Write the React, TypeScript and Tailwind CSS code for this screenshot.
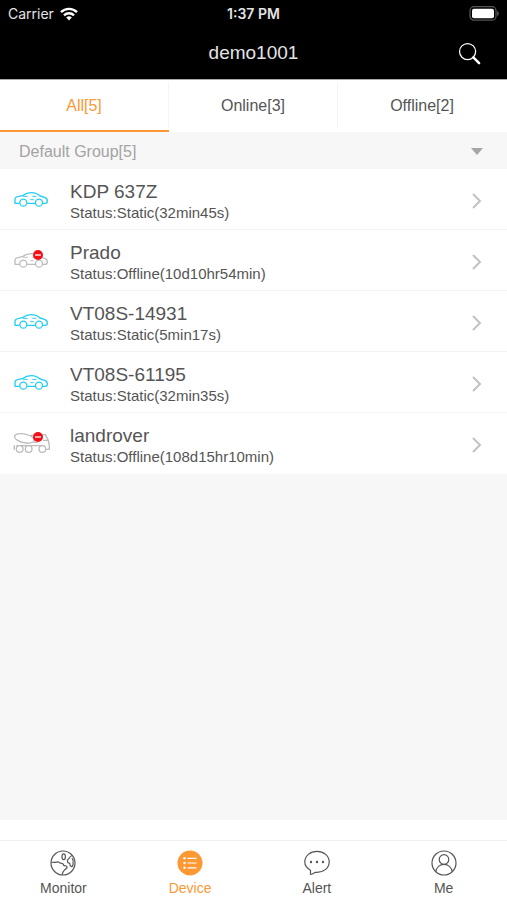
import React, { memo } from "react";
import clsx from "clsx";

type VehicleKind = "car" | "mixer";

interface Device {
  id: number;
  name: string;
  status: string;
  kind: VehicleKind;
  offline?: boolean;
}

const devices: Device[] = [
  { id: 1, name: "KDP 637Z", status: "Static(32min45s)", kind: "car" },
  { id: 2, name: "Prado", status: "Offline(10d10hr54min)", kind: "car", offline: true },
  { id: 3, name: "VT08S-14931", status: "Static(5min17s)", kind: "car" },
  { id: 4, name: "VT08S-61195", status: "Static(32min35s)", kind: "car" },
  { id: 5, name: "landrover", status: "Offline(108d15hr10min)", kind: "mixer", offline: true },
];

const filters = [
  { label: "All[5]", active: true },
  { label: "Online[3]", active: false },
  { label: "Offline[2]", active: false },
];

function CarIcon() {
  return (
    <svg viewBox="0 0 114 60" fill="none" stroke="currentColor" strokeWidth="4" strokeLinejoin="round" className="h-5 w-[38px]">
      <path d="M19 43H6V31c0-5 4-8 12-9l10-2c8-6 15-9 27-9 12 0 19 3 26 10l14 4c6 2 8 6 8 11l-1 5-4 2h-8M43 43h24" />
      <circle cx="31" cy="41" r="10.5" />
      <circle cx="78" cy="41" r="10.5" />
      <path d="M30 22h14M58 22h12M52 32h10" strokeWidth="3" />
    </svg>
  );
}

function MixerIcon() {
  return (
    <svg viewBox="0 0 114 66" fill="none" stroke="currentColor" strokeWidth="4" strokeLinejoin="round" className="h-[22px] w-[38px]">
      <ellipse cx="34" cy="19" rx="30" ry="13" transform="rotate(12 34 19)" />
      <path d="M4 40v13M52 11l22-4M62 31h12M10 41h84M86 8h11l9 17 3 14v13h-9M90 25h14" />
      <g fill="#fff">
        <circle cx="20" cy="51" r="10" />
        <circle cx="47" cy="51" r="10" />
        <circle cx="88" cy="51" r="10" />
      </g>
    </svg>
  );
}

const DeviceRow = memo(function DeviceRow({ name, status, kind, offline }: Device) {
  return (
    <li className="border-b border-[#f3f3f3] last:border-white">
      <button type="button" className="flex h-[60px] w-full items-center pt-[3px] pr-6 pl-[13px] text-left">
        <span className={clsx("relative flex w-[57px] shrink-0 pb-1", offline ? "text-[#bcbcbc]" : "text-[#22cdf5]")}>
          {kind === "car" ? <CarIcon /> : <MixerIcon />}
          {offline && (
            <svg viewBox="0 0 10 10" className="absolute top-0 left-5 size-[10px]">
              <circle cx="5" cy="5" r="5" fill="#f01018" />
              <path d="M2 5h6" stroke="#fff" strokeWidth="1.3" />
            </svg>
          )}
        </span>
        <span className="flex flex-1 flex-col text-[#555]">
          <span className="text-[19px] leading-6">{name}</span>
          <span className="text-[15px] leading-[18px]">Status:{status}</span>
        </span>
        <svg viewBox="0 0 12 18" fill="none" stroke="#c2c2c2" strokeWidth="2" className="h-[18px] w-3">
          <path d="m2 2 7 7-7 7" />
        </svg>
      </button>
    </li>
  );
});

function MonitorIcon() {
  return (
    <svg viewBox="0 0 26 26" fill="none" stroke="currentColor" strokeWidth="1.2" strokeLinejoin="round" className="size-[26px]">
      <circle cx="13" cy="13" r="12" />
      <path d="M1.200 12.300c2.500-.3 4.500.5 6.800-.5l2.500 1.400 2.200.3 1 1.900 3 .9.400 1.500-2.600 2.200-1.200 1.600-1.300 3.200" />
      <ellipse cx="13.700" cy="6.800" rx="1.700" ry="2.900" />
      <path d="M22.300 5.500c-2 .5-2.700 1.600-3 2.700l-1.900 1.900.4 2.500 1.900.6.600 2.600 1.500.9c1.200-.9 1.400-2.300 1.300-3.500.5-2 0-3.800-1.200-5" />
    </svg>
  );
}

function DeviceIcon() {
  return (
    <svg viewBox="0 0 26 26" className="size-[26px]">
      <circle cx="13" cy="13" r="12.5" fill="#fd9833" />
      <g fill="#fff">
        <circle cx="7.5" cy="8.3" r="1.2" />
        <circle cx="7.5" cy="13" r="1.2" />
        <circle cx="7.5" cy="17.8" r="1.2" />
      </g>
      <path d="M10.500 8.300h9M10.500 13h9M10.500 17.800h9" stroke="#fff" strokeWidth="1.2" />
    </svg>
  );
}

function AlertIcon() {
  return (
    <svg viewBox="0 0 26 26" fill="none" stroke="currentColor" strokeWidth="1.2" strokeLinejoin="round" className="size-[26px]">
      <path d="M6.500 24.500v-4.300C3 18.200.8 15.400.8 12 .8 6 6.200 1.300 13 1.300S25.200 6 25.200 12 19.800 22.300 13 22.300h-2c-1 1-2.500 1.800-4.500 2.200Z" />
      <g fill="currentColor" stroke="none">
        <circle cx="7" cy="12" r="1.2" />
        <circle cx="13" cy="12" r="1.2" />
        <circle cx="19" cy="12" r="1.2" />
      </g>
    </svg>
  );
}

function MeIcon() {
  return (
    <svg viewBox="0 0 26 26" fill="none" stroke="currentColor" strokeWidth="1.2" className="size-[26px]">
      <circle cx="13" cy="13" r="12" />
      <circle cx="13" cy="9.5" r="4.8" />
      <path d="M4.800 21.700C5.500 17.300 8.800 14.300 13 14.300s7.500 3 8.200 7.400" />
    </svg>
  );
}

const tabs = [
  { label: "Monitor", icon: MonitorIcon, active: false },
  { label: "Device", icon: DeviceIcon, active: true },
  { label: "Alert", icon: AlertIcon, active: false },
  { label: "Me", icon: MeIcon, active: false },
];

export default function App() {
  return (
    <div className="flex min-h-screen flex-col bg-white font-['Liberation_Sans',Arial,sans-serif]">
      <header className="border-b border-[#aaa] bg-black text-[#e4e4e4]">
        {/* status bar */}
        <div className="grid h-[27px] grid-cols-3 items-center px-2 font-['Inter',sans-serif] text-[14px]">
          <div className="flex items-center gap-[6px]">
            <span>Carrier</span>
            <svg viewBox="0 0 18 14" fill="none" stroke="#fff" strokeWidth="2.4" className="h-[14px] w-[18px]">
              <path d="M1 5.100a11.500 11.500 0 0 1 16 0M4 8.300a7.200 7.200 0 0 1 10 0" />
              <path d="m9 13.500-2.800-2.900a4 4 0 0 1 5.600 0Z" fill="#fff" stroke="none" />
            </svg>
          </div>
          <span className="text-center font-semibold">1:37 PM</span>
          <svg viewBox="0 0 30 15" className="h-[15px] w-[30px] justify-self-end">
            <rect x="1" y=".7" width="26" height="13.5" rx="4" fill="none" stroke="#555" strokeWidth="1.3" />
            <rect x="3" y="2.7" width="22" height="9.5" rx="2" fill="#fff" />
            <path d="M28.200 5c2 .8 2 4.200 0 5Z" fill="#666" />
          </svg>
        </div>
        <div className="grid h-[52px] grid-cols-[1fr_auto_1fr] items-center px-[26px]">
          <h1 className="col-start-2 text-[19px] leading-6">demo1001</h1>
          <button type="button" aria-label="Search" className="justify-self-end">
            <svg viewBox="0 0 24 24" fill="none" stroke="#fff" className="size-[23px]">
              <circle cx="10" cy="10" r="8.4" strokeWidth="1.3" />
              <path d="m16 16 6 6" strokeWidth="2.6" strokeLinecap="round" />
            </svg>
          </button>
        </div>
      </header>

      <nav className="grid h-[52px] grid-cols-3 text-[16px]">
        {filters.map((filter) => (
          <button
            key={filter.label}
            type="button"
            className={clsx(
              "group border-b-2",
              filter.active ? "border-[#fd9833] text-[#fd9833]" : "border-transparent text-[#555]"
            )}
          >
            <span className="flex h-[46px] items-center justify-center border-r border-[#f5f5f5] pt-[2px] group-last:border-transparent">
              {filter.label}
            </span>
          </button>
        ))}
      </nav>

      <main className="flex-1 bg-[#f7f7f7]">
        <button type="button" className="flex h-[37px] w-full items-center justify-between pt-[2px] pr-6 pl-[19px] text-[16px] text-[#a3a3a3]">
          <span>Default Group[5]</span>
          <svg viewBox="0 0 12 7" className="h-[7px] w-3">
            <path d="M0 0h12L6 7Z" fill="#a5a5a5" />
          </svg>
        </button>
        <ul className="bg-white">
          {devices.map((device) => (
            <DeviceRow key={device.id} {...device} />
          ))}
        </ul>
      </main>

      <footer className="pt-5">
        <nav className="grid h-[60px] grid-cols-4 border-t border-[#f0f0f0]">
          {tabs.map(({ label, icon: Icon, active }) => (
            <a
              key={label}
              href={`#${label.toLowerCase()}`}
              className={clsx("flex flex-col items-center gap-1 pt-[9px] text-[14px] leading-4", active ? "text-[#fd9833]" : "text-[#555]")}
            >
              <Icon />
              <span>{label}</span>
            </a>
          ))}
        </nav>
      </footer>
    </div>
  );
}
